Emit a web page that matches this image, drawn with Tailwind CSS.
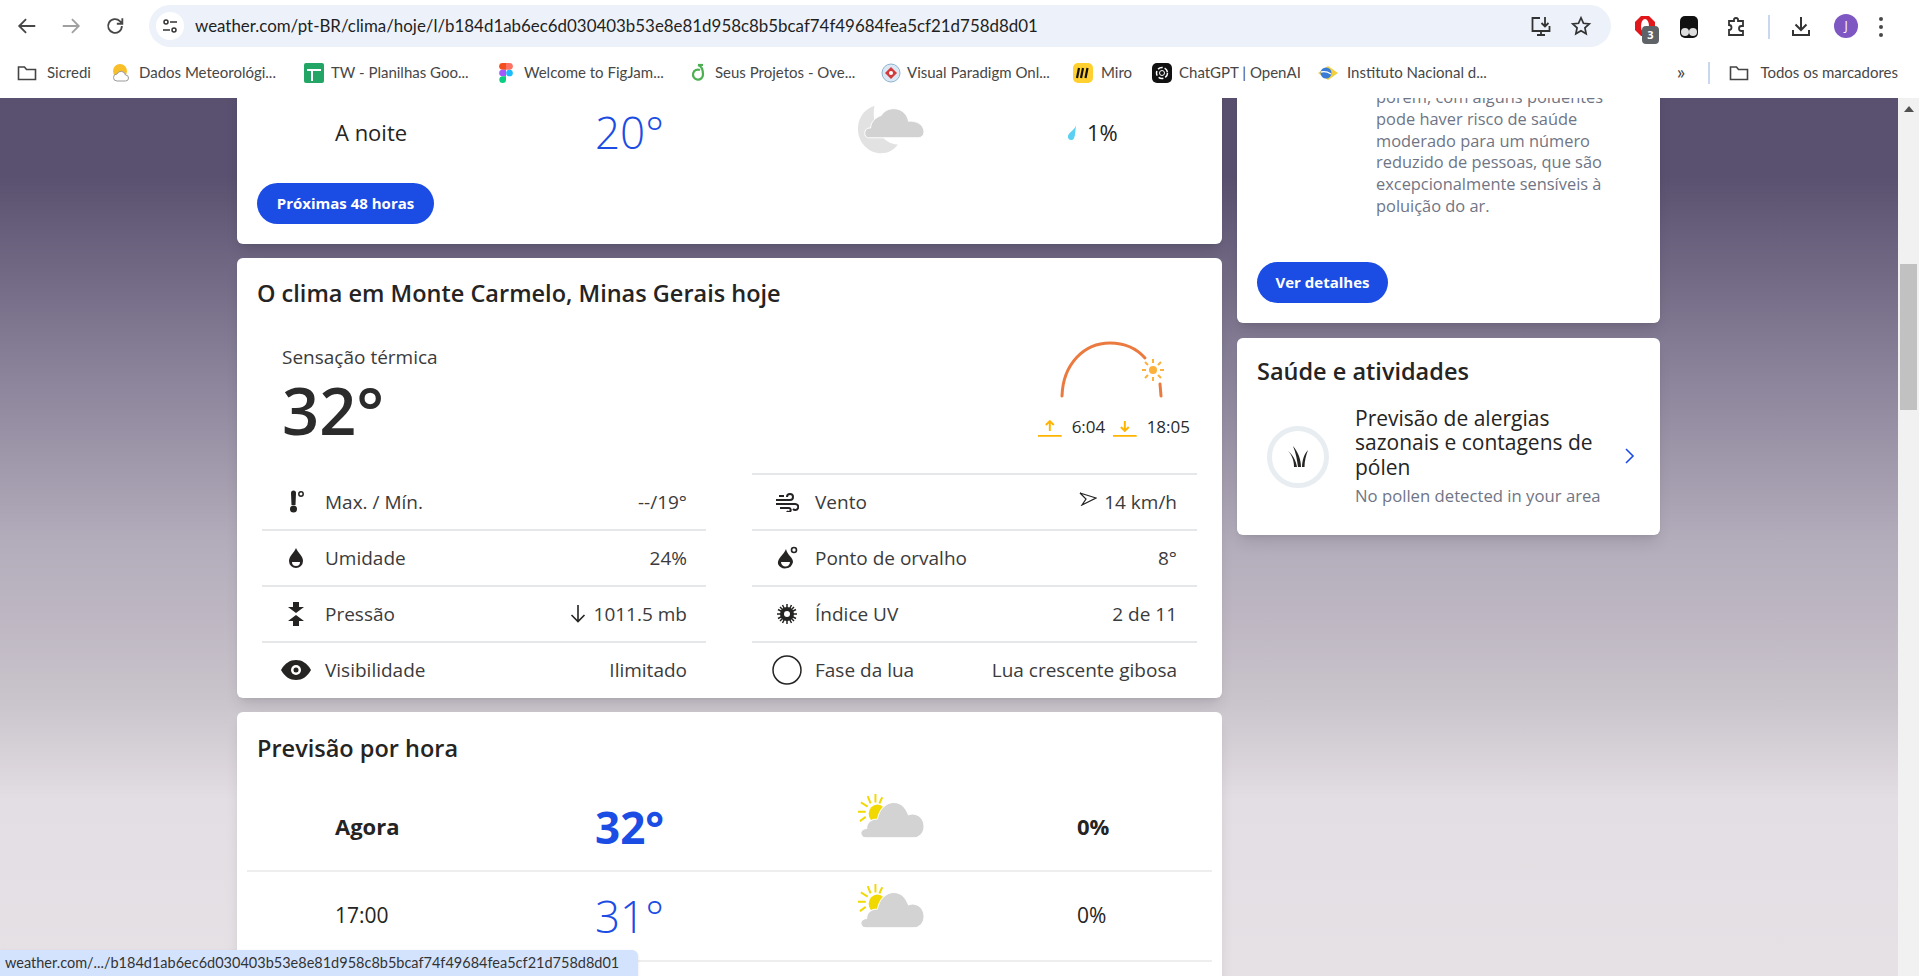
<!DOCTYPE html>
<html lang="pt-BR">

<head>
    <meta charset="utf-8">
    <title>Clima hoje</title>
    <script src="https://cdn.jsdelivr.net/npm/@tailwindcss/browser@4"></script>
</head>

<body class="h-screen w-screen overflow-hidden flex flex-col bg-white font-['Open_Sans',sans-serif] text-[#252422]">

    <!-- BROWSER TOOLBAR -->
    <div class="h-[52px] shrink-0 flex items-center text-[#474747]">
        <div class="w-[149px] flex items-center pl-[16px] gap-[22px]">
            <svg class="w-[22px] h-[22px]" viewBox="0 0 24 24" fill="none" stroke="#474747" stroke-width="2"><path d="M21 12H4M11 4.500 3.500 12l7.500 7.500"/></svg>
            <svg class="w-[22px] h-[22px]" viewBox="0 0 24 24" fill="none" stroke="#a0a0a0" stroke-width="2"><path d="M3 12h17M13 4.500l7.500 7.500-7.500 7.500"/></svg>
            <svg class="w-[22px] h-[22px]" viewBox="0 0 24 24" fill="none" stroke="#474747" stroke-width="2"><path d="M19.500 12a7.500 7.500 0 1 1-2.200-5.300L20 9.500M20 3.500v6h-6"/></svg>
        </div>
        <div class="w-[1462px] h-[42px] rounded-full bg-[#edf2fa] flex items-center pl-[7px] pr-[19px]">
            <div class="w-[28px] h-[28px] rounded-full bg-white flex items-center justify-center">
                <svg class="w-[18px] h-[18px]" viewBox="0 0 18 18" fill="none" stroke="#333" stroke-width="1.500"><circle cx="5" cy="5" r="2"/><path d="M9 5h7M2 13h7"/><circle cx="13" cy="13" r="2"/></svg>
            </div>
            <span class="ml-[11px] text-[16.900px] text-[#1f1f1f] font-['Lato',sans-serif]">weather.com/pt-BR/clima/hoje/l/b184d1ab6ec6d030403b53e8e81d958c8b5bcaf74f49684fea5cf21d758d8d01</span>
            <svg class="ml-auto w-[24px] h-[24px]" viewBox="0 0 24 24" fill="none" stroke="#333" stroke-width="1.800"><path d="M11 4H3.500v13h17v-5M8 21h8M12 17v4M16 3v9M12.500 9l3.500 3.500L19.500 9"/></svg>
            <svg class="ml-[17px] w-[22px] h-[22px]" viewBox="0 0 24 24" fill="none" stroke="#333" stroke-width="1.900"><path d="m12 3 2.700 6 6.300.7-4.700 4.300 1.300 6.500L12 17.200 6.400 20.500 7.700 14 3 9.700 9.300 9z"/></svg>
        </div>
        <div class="relative w-[308px] h-full">
            <svg class="absolute left-[22px] top-[14px] w-[24px] h-[24px]" viewBox="0 0 24 24"><path d="M8 2h8l6 6v8l-6 6H8l-6-6V8z" fill="#e2171c"/><ellipse cx="12" cy="12" rx="4" ry="7" fill="#fff"/></svg>
            <div class="absolute left-[31px] top-[26px] w-[17px] h-[18px] rounded-[4px] bg-[#5f6368] text-white text-[11px] font-bold leading-[18px] text-center">3</div>
            <svg class="absolute left-[67px] top-[15px] w-[22px] h-[24px]" viewBox="0 0 22 24"><rect x="2" y="1" width="18" height="22" rx="5" fill="#111"/><circle cx="7" cy="17" r="4" fill="#ddd"/><circle cx="15" cy="17" r="4" fill="#ddd"/></svg>
            <svg class="absolute left-[113px] top-[14px] w-[24px] h-[24px]" viewBox="0 0 24 24" fill="none" stroke="#333" stroke-width="1.800"><path d="M5 7h5V5a2.500 2.500 0 0 1 4 0v2h5v5h-1.500a2.500 2.500 0 0 0 0 5H19v4H5v-5a2.500 2.500 0 0 0 0-5z"/></svg>
            <div class="absolute left-[157px] top-[15px] w-[2px] h-[24px] bg-[#c9d7f0]"></div>
            <svg class="absolute left-[178px] top-[14px] w-[24px] h-[24px]" viewBox="0 0 24 24" fill="none" stroke="#333" stroke-width="2"><path d="M12 3v13M6.500 10.500 12 16l5.500-5.500M4 16v5h16v-5"/></svg>
            <div class="absolute left-[223px] top-[14px] w-[24px] h-[24px] rounded-full bg-[#7e57c2] text-white text-[12px] leading-[24px] text-center">J</div>
            <div class="absolute left-[268px] top-[17px] flex flex-col gap-[4px]">
                <span class="w-[4px] h-[4px] rounded-full bg-[#474747]"></span>
                <span class="w-[4px] h-[4px] rounded-full bg-[#474747]"></span>
                <span class="w-[4px] h-[4px] rounded-full bg-[#474747]"></span>
            </div>
        </div>
    </div>

    <!-- BOOKMARKS -->
    <div class="h-[46px] shrink-0 flex items-center text-[15px] text-[#474747] font-['Lato',sans-serif] pb-[5px]">
        <div class="flex items-center w-[112px] pl-[17px] gap-[10px]">
            <svg class="w-[20px] h-[18px]" viewBox="0 0 20 18" fill="none" stroke="#444" stroke-width="1.600"><path d="M1.500 3h6l2 2.500h9v10h-17z"/></svg>
            <span>Sicredi</span>
        </div>
        <div class="flex items-center w-[192px] gap-[9px]">
            <svg class="w-[18px] h-[20px]" viewBox="0 0 18 20"><circle cx="8" cy="8" r="7" fill="#f8bf29"/><path d="M5 18a3.500 3.500 0 0 1 0-7 4.500 4.500 0 0 1 8.500 1 3 3 0 0 1 0 6z" fill="#fff" stroke="#999"/></svg>
            <span>Dados Meteorológi...</span>
        </div>
        <div class="flex items-center w-[192px] gap-[7px]">
            <svg class="w-[20px] h-[20px]" viewBox="0 0 20 20"><rect width="20" height="20" rx="2" fill="#23a566"/><path d="M3 7h14M8 7v11" stroke="#fff" stroke-width="2"/></svg>
            <span>TW - Planilhas Goo...</span>
        </div>
        <div class="flex items-center w-[193px] gap-[11px]">
            <svg class="w-[14px] h-[20px] ml-[3px]" viewBox="0 0 14 20"><path d="M3.500 0H7v6.700H3.500a3.350 3.350 0 0 1 0-6.700" fill="#f24e1e"/><path d="M7 0h3.500a3.350 3.350 0 0 1 0 6.700H7z" fill="#ff7262"/><path d="M3.500 6.700H7v6.600H3.500a3.300 3.300 0 0 1 0-6.600" fill="#a259ff"/><circle cx="10.500" cy="10" r="3.350" fill="#1abcfe"/><path d="M3.500 13.300H7v3.300a3.350 3.350 0 1 1-3.500-3.300" fill="#0acf83"/></svg>
            <span>Welcome to FigJam...</span>
        </div>
        <div class="flex items-center w-[192px] gap-[8px]">
            <svg class="w-[18px] h-[20px]" viewBox="0 0 18 20" fill="none" stroke="#4caf50" stroke-width="2.200"><path d="M11 7a5 5 0 1 0 3 4.500C14 7 12 3 9 2"/><path d="M9 2 14 2"/></svg>
            <span>Seus Projetos - Ove...</span>
        </div>
        <div class="flex items-center w-[192px] gap-[6px]">
            <svg class="w-[20px] h-[20px]" viewBox="0 0 20 20"><circle cx="10" cy="10" r="9" fill="#dbe7f3" stroke="#8fb3d0"/><path d="m10 4 6 6-6 6-6-6z" fill="#d13b3b"/><circle cx="10" cy="10" r="2" fill="#fff"/></svg>
            <span>Visual Paradigm Onl...</span>
        </div>
        <div class="flex items-center w-[79px] gap-[8px]">
            <svg class="w-[20px] h-[20px]" viewBox="0 0 20 20"><rect width="20" height="20" rx="5" fill="#ffd02f"/><path d="M6 5 4 15M10 5 8 15M14.500 5 12.500 15" stroke="#111" stroke-width="2.200"/></svg>
            <span>Miro</span>
        </div>
        <div class="flex items-center w-[166px] gap-[7px]">
            <svg class="w-[20px] h-[20px]" viewBox="0 0 20 20" fill="none"><rect width="20" height="20" rx="5" fill="#111"/><circle cx="10" cy="10" r="5.500" stroke="#fff" stroke-width="1.500" stroke-dasharray="5 2"/><circle cx="10" cy="10" r="2.500" stroke="#fff"/></svg>
            <span>ChatGPT | OpenAI</span>
        </div>
        <div class="flex items-center gap-[9px]">
            <svg class="w-[20px] h-[20px]" viewBox="0 0 20 20"><path d="M0 10 10 3l10 7-10 7z" fill="#f4cf3f"/><circle cx="8" cy="10" r="5.500" fill="#3a7bd5"/><path d="M3 9c4-1 7 0 10 2" stroke="#fff" stroke-width="1.300" fill="none"/></svg>
            <span>Instituto Nacional d...</span>
        </div>
        <span class="ml-[190px] text-[20px] leading-none pb-[4px]">»</span>
        <div class="ml-[23px] w-[2px] h-[22px] bg-[#c9d7f0]"></div>
        <svg class="ml-[19px] w-[20px] h-[18px]" viewBox="0 0 20 18" fill="none" stroke="#444" stroke-width="1.600"><path d="M1.500 3h6l2 2.500h9v10h-17z"/></svg>
        <span class="ml-[11px]">Todos os marcadores</span>
    </div>

    <!-- PAGE -->
    <div class="relative flex-1 flex overflow-hidden">
        <div class="flex-1 overflow-hidden bg-[linear-gradient(to_bottom,#5a5170_0%,#5a5170_9%,#7f7790_26%,#b2abba_50%,#cac4cc_69%,#e3dee3_80%,#e6e1e5_100%)]">
            <div class="flex -mt-[60px] pl-[237px] gap-[15px] items-start">

                <!-- LEFT COLUMN -->
                <div class="w-[985px] flex flex-col gap-[14px]">

                    <!-- TODAY -->
                    <section class="rounded-md bg-white shadow-lg pt-[64px] pb-[20px]">
                        <div class="flex items-center h-[60px] mx-[10px] text-[22px]">
                            <div class="w-[348px] pl-[88px]">A noite</div>
                            <div class="w-[262px] text-[44px] font-light text-[#1b4de4] leading-none">20°</div>
                            <div class="w-[210px]">
                                <svg class="w-[68px] h-[52px] -mt-[4px]" viewBox="0 0 70 52"><path d="M18 1C6 5 1 15 1 25c0 14 11 25 24 25 7 0 13-3 17-9C26 40 14 22 18 1" fill="#e2e2e2"/><path d="M12 34c-4 0-5-5-3-8 1-2 3-2 5-2 0-6 5-11 11-13 3-5 8-7 13-7 8 0 14 6 15 13 7-1 16 3 16 11 0 4-3 6-6 6z" fill="#d2d2d2" stroke="#fff"/></svg>
                            </div>
                            <div class="flex items-center gap-[9px]">
                                <svg class="w-[11px] h-[15px]" viewBox="0 0 11 15"><path d="M9 0C8 5 2 7 1 11c-.500 2 1 4 3 4 3 0 3-2 4-5z" fill="#5bd0f2"/></svg>
                                <span>1%</span>
                            </div>
                        </div>
                        <a class="mt-[21px] ml-[20px] h-[41px] w-[177px] rounded-full bg-[#1b4de4] text-white text-[15px] font-bold flex items-center justify-center">Próximas 48 horas</a>
                    </section>

                    <!-- TODAY DETAILS -->
                    <section class="rounded-md bg-white shadow-lg h-[440px] overflow-hidden">
                        <h2 class="pt-[18px] pl-[20px] text-[23.500px] font-semibold leading-[34px]">O clima em Monte Carmelo, Minas Gerais hoje</h2>
                        <div class="flex justify-between pl-[45px] pr-[32px] h-[165px]">
                            <div class="pt-[34px]">
                                <div class="text-[19px] leading-[26px] text-[#3b3b3b]">Sensação térmica</div>
                                <div class="text-[65px] font-semibold leading-[80px] text-[#2b2b2b]">32°</div>
                            </div>
                            <div class="w-[152px] pt-[30px]">
                                <svg class="ml-[22px] w-[106px] h-[60px]" viewBox="0 0 106 60" fill="none">
                                    <path d="M2 56C3 24 24 3 50 3c15 0 27 6 35 15" stroke="#ea7a3f" stroke-width="3" stroke-linecap="round"/>
                                    <path d="M100 44l1 12" stroke="#ea7a3f" stroke-width="3" stroke-linecap="round"/>
                                    <circle cx="93" cy="30" r="4" fill="#fbb13c"/>
                                    <path d="M93 19v4M93 37v4M82 30h4M100 30h4M85 22l3 3M98 35l3 3M85 38l3-3M98 25l3-3" stroke="#fbb13c" stroke-width="2"/>
                                </svg>
                                <div class="flex items-center mt-[15px] h-[24px] text-[17px] text-[#2b2b2b]">
                                    <svg class="w-[24px] h-[24px]" viewBox="0 0 24 24" fill="none" stroke="#ffb400" stroke-width="2"><path d="M0 21h24M12 16V6M8 10l4-4 4 4"/></svg>
                                    <span class="ml-[10px] w-[42px]">6:04</span>
                                    <svg class="w-[24px] h-[24px]" viewBox="0 0 24 24" fill="none" stroke="#ffb400" stroke-width="2"><path d="M0 21h24M12 6v10M8 12l4 4 4-4"/></svg>
                                    <span class="ml-[10px]">18:05</span>
                                </div>
                            </div>
                        </div>
                        <div class="grid grid-cols-[444px_445px] gap-x-[46px] pl-[25px] text-[19px] text-[#3b3b3b]">
                            <div>
                                <div class="h-[56px] border-b-2 border-[#e6e7e9] flex items-center pr-[19px]">
                                    <span class="w-[63px] flex justify-center pl-[5px]">
                                        <svg class="w-[20px] h-[24px]" viewBox="0 0 20 24"><path d="M5 3a2.500 2.500 0 0 1 5 0l-.5 12h-4z" fill="#252422"/><circle cx="7.500" cy="19" r="3.500" fill="#252422"/><circle cx="15" cy="4" r="2.200" fill="none" stroke="#252422" stroke-width="1.500"/></svg>
                                    </span>
                                    <span>Max. / Mín.</span>
                                    <span class="ml-auto">--/19°</span>
                                </div>
                                <div class="h-[56px] border-b-2 border-[#e6e7e9] flex items-center pr-[19px]">
                                    <span class="w-[63px] flex justify-center pl-[5px]">
                                        <svg class="w-[18px] h-[22px]" viewBox="0 0 18 22"><path d="M9 1c2 5 7 8 7 13a7 7 0 0 1-14 0c0-5 5-8 7-13" fill="#252422"/><path d="M5 15a4 4 0 0 0 8 0z" fill="#fff"/></svg>
                                    </span>
                                    <span>Umidade</span>
                                    <span class="ml-auto">24%</span>
                                </div>
                                <div class="h-[56px] border-b-2 border-[#e6e7e9] flex items-center pr-[19px]">
                                    <span class="w-[63px] flex justify-center pl-[5px]">
                                        <svg class="w-[18px] h-[24px]" viewBox="0 0 18 24" fill="#252422"><path d="M6 0h6v5h5l-8 6-8-6h5zM9 13l8 6h-5v5H6v-5H1z"/></svg>
                                    </span>
                                    <span>Pressão</span>
                                    <span class="ml-auto flex items-center gap-[8px]">
                                        <svg class="w-[16px] h-[18px]" viewBox="0 0 16 18" fill="none" stroke="#252422" stroke-width="1.600"><path d="M8 0v16M1.500 10 8 16.500 14.500 10"/></svg>
                                        1011.5 mb
                                    </span>
                                </div>
                                <div class="h-[54px] flex items-center pr-[19px]">
                                    <span class="w-[63px] flex justify-center pl-[5px]">
                                        <svg class="w-[30px] h-[20px]" viewBox="0 0 30 20"><path d="M0 10C4 3 9 0 15 0s11 3 15 10c-4 7-9 10-15 10S4 17 0 10" fill="#252422"/><circle cx="15" cy="10" r="5" fill="#fff"/><circle cx="15" cy="10" r="2.500" fill="#252422"/></svg>
                                    </span>
                                    <span>Visibilidade</span>
                                    <span class="ml-auto">Ilimitado</span>
                                </div>
                            </div>
                            <div class="border-t-2 border-[#e6e7e9] -mt-[2px]">
                                <div class="h-[56px] border-b-2 border-[#e6e7e9] flex items-center pr-[20px]">
                                    <span class="w-[63px] flex justify-center pl-[6px]">
                                        <svg class="w-[24px] h-[20px]" viewBox="0 0 24 20" fill="none" stroke="#252422" stroke-width="2"><path d="M1 8h14a3 3 0 1 0-3-3M1 12h19a3 3 0 1 1-2 5M4 4h5M5 16h9a2 2 0 1 1-2 3"/></svg>
                                    </span>
                                    <span>Vento</span>
                                    <span class="ml-auto flex items-center gap-[7px]">
                                        <svg class="w-[18px] h-[14px] -mt-[6px]" viewBox="0 0 18 14" fill="none" stroke="#252422" stroke-width="1.200"><path d="M1 1l16 5-14 7 4-6z"/></svg>
                                        14 km/h
                                    </span>
                                </div>
                                <div class="h-[56px] border-b-2 border-[#e6e7e9] flex items-center pr-[20px]">
                                    <span class="w-[63px] flex justify-center pl-[6px]">
                                        <svg class="w-[24px] h-[24px]" viewBox="0 0 24 24"><path d="M11 3c1 6 7 8 7 13a8 8 0 0 1-15 2c-1-6 6-9 8-15" fill="#252422"/><path d="M6 16a4.500 4.500 0 0 0 9 0z" fill="#fff"/><circle cx="19" cy="4" r="2.500" fill="none" stroke="#252422" stroke-width="1.600"/></svg>
                                    </span>
                                    <span>Ponto de orvalho</span>
                                    <span class="ml-auto">8°</span>
                                </div>
                                <div class="h-[56px] border-b-2 border-[#e6e7e9] flex items-center pr-[20px]">
                                    <span class="w-[63px] flex justify-center pl-[6px]">
                                        <svg class="w-[22px] h-[22px]" viewBox="0 0 22 22"><circle cx="11" cy="11" r="7" fill="#252422"/><path d="M11 1v20M1 11h20M4 4l14 14M18 4 4 18M6.500 2l9 18M15.500 2l-9 18M2 6.500l18 9M20 6.500l-18 9" stroke="#252422" stroke-width="1.500"/><circle cx="11" cy="11" r="3" fill="#fff"/></svg>
                                    </span>
                                    <span>Índice UV</span>
                                    <span class="ml-auto">2 de 11</span>
                                </div>
                                <div class="h-[54px] flex items-center pr-[20px]">
                                    <span class="w-[63px] flex justify-center pl-[6px]">
                                        <svg class="w-[30px] h-[30px]" viewBox="0 0 30 30"><circle cx="15" cy="15" r="14" fill="#fff" stroke="#252422" stroke-width="1.500"/></svg>
                                    </span>
                                    <span>Fase da lua</span>
                                    <span class="ml-auto">Lua crescente gibosa</span>
                                </div>
                            </div>
                        </div>
                    </section>

                    <!-- HOURLY -->
                    <section class="rounded-md bg-white shadow-lg h-[400px]">
                        <h2 class="pt-[19px] pl-[20px] text-[23.500px] font-semibold leading-[34px]">Previsão por hora</h2>
                        <div class="mt-[18px] h-[89px] mx-[10px] border-b-2 border-[#eeeeee] flex items-center text-[22px] font-bold">
                            <div class="w-[348px] pl-[88px]">Agora</div>
                            <div class="w-[262px] text-[44px] text-[#1b4de4] leading-none">32°</div>
                            <div class="w-[220px]">
                                <svg class="w-[68px] h-[50px] -mt-[17px]" viewBox="0 0 70 48" preserveAspectRatio="none"><g stroke="#f1d900" stroke-width="2"><path d="M19 1v8M11 3l3 7M26 4l-3 6M4 9l7 4M1 18h8M3 27l6-4"/></g><circle cx="21" cy="20" r="9" fill="#f1d900"/><path d="M9 43C4 43 3 38 5 36c2-2 4-2 5-2 0-6 5-9 11-9 2-10 9-16 17-16s13 6 15 12c7-3 16 2 16 11 0 7-5 11-11 11z" fill="#d3d3d3" stroke="#fff" stroke-width="1"/></svg>
                            </div>
                            <div>0%</div>
                        </div>
                        <div class="h-[90px] mx-[10px] border-b-2 border-[#eeeeee] flex items-center text-[21px]">
                            <div class="w-[348px] pl-[88px]">17:00</div>
                            <div class="w-[262px] text-[44px] font-light text-[#1b4de4] leading-none">31°</div>
                            <div class="w-[220px]">
                                <svg class="w-[68px] h-[50px] -mt-[17px]" viewBox="0 0 70 48" preserveAspectRatio="none"><g stroke="#f1d900" stroke-width="2"><path d="M19 1v8M11 3l3 7M26 4l-3 6M4 9l7 4M1 18h8M3 27l6-4"/></g><circle cx="21" cy="20" r="9" fill="#f1d900"/><path d="M9 43C4 43 3 38 5 36c2-2 4-2 5-2 0-6 5-9 11-9 2-10 9-16 17-16s13 6 15 12c7-3 16 2 16 11 0 7-5 11-11 11z" fill="#d3d3d3" stroke="#fff" stroke-width="1"/></svg>
                            </div>
                            <div>0%</div>
                        </div>
                    </section>
                </div>

                <!-- RIGHT COLUMN -->
                <div class="w-[423px] flex flex-col gap-[15px]">
                    <section class="rounded-md bg-white shadow-lg pt-[48px] pb-[20px]">
                        <p class="pl-[139px] text-[16.400px] leading-[21.750px] text-[#6f7585]">porém, com alguns poluentes<br>pode haver risco de saúde<br>moderado para um número<br>reduzido de pessoas, que são<br>excepcionalmente sensíveis à<br>poluição do ar.</p>
                        <a class="mt-[45px] ml-[20px] h-[41px] w-[131px] rounded-full bg-[#1b4de4] text-white text-[15px] font-bold flex items-center justify-center">Ver detalhes</a>
                    </section>
                    <section class="rounded-md bg-white shadow-lg h-[197px]">
                        <h2 class="pt-[16px] pl-[20px] text-[23.500px] font-semibold leading-[34px]">Saúde e atividades</h2>
                        <div class="flex items-center mt-[18px] pl-[30px]">
                            <div class="w-[62px] h-[62px] rounded-full border-[5px] border-[#e8edf2] flex items-center justify-center">
                                <svg class="w-[22px] h-[22px]" viewBox="0 0 22 22" fill="#252422"><path d="M11 21C10 14 9 7 6 0c5 6 8 13 8 21zM7 21C7 15 5 9 1 5c4 3 8 9 9 16zM15 21c0-6 2-13 6-17-2 5-3.500 11-3.500 17z"/></svg>
                            </div>
                            <div class="ml-[26px] w-[262px]">
                                <div class="text-[21px] leading-[24.500px]">Previsão de alergias sazonais e contagens de pólen</div>
                                <div class="mt-[5px] text-[16.700px] leading-[24px] text-[#6f7585]">No pollen detected in your area</div>
                            </div>
                            <svg class="ml-[7px] -mt-[2px] w-[12px] h-[18px]" viewBox="0 0 12 18" fill="none" stroke="#1b4de4" stroke-width="1.600"><path d="m2 2 7 7-7 7"/></svg>
                        </div>
                    </section>
                </div>
            </div>
        </div>

        <!-- SCROLLBAR -->
        <div class="w-[21px] shrink-0 bg-[#f1f1f1] flex flex-col items-center pt-[8px]">
            <div class="w-0 h-0 border-x-[5px] border-x-transparent border-b-[6px] border-b-[#505050]"></div>
            <div class="mt-[152px] w-[17px] h-[146px] bg-[#c1c1c1]"></div>
        </div>

        <!-- STATUS BUBBLE -->
        <div class="absolute left-0 bottom-0 w-[638px] h-[26px] bg-[#d3e3fd] rounded-tr-md pl-[5px] text-[14.500px] leading-[26px] text-[#333] font-['Lato',sans-serif] shadow-sm">weather.com/.../b184d1ab6ec6d030403b53e8e81d958c8b5bcaf74f49684fea5cf21d758d8d01</div>
    </div>
</body>

</html>
